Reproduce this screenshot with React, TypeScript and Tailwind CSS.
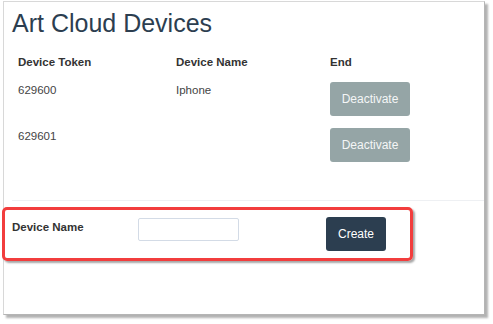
import React from "react";

export default function App() {
  const rows = [
    { token: "629600", name: "Iphone" },
    { token: "629601", name: "" },
  ];
  return (
    <div
      className="relative w-[493px] h-[324px] bg-white overflow-hidden"
      style={{ fontFamily: '"Liberation Sans", Arial, sans-serif' }}
    >
      <div className="ml-[3px] mt-[1px] w-[482px] h-[314px] border border-[#d8d8d8] border-r-[#b5b5b5] border-b-[#b5b5b5] shadow-[3px_3px_2px_rgba(0,0,0,0.3)] bg-white flex flex-col">
        <h1 className="ml-[8px] mt-[7px] text-[25px] leading-[28px] text-[#2c3e50] font-normal">
          Art Cloud Devices
        </h1>

        <div className="ml-[14px] mt-[17px] flex flex-col">
          <div className="flex h-[16px] items-center text-[11.5px] leading-[16px] font-bold text-[#333]">
            <div className="w-[158px]">Device Token</div>
            <div className="w-[154px]">Device Name</div>
            <div>End</div>
          </div>
          <div className="mt-[12px] flex flex-col gap-[12px]">
            {rows.map((r) => (
              <div key={r.token} className="flex items-start text-[11.5px] leading-[16px] text-[#444]">
                <div className="w-[158px]">{r.token}</div>
                <div className="w-[154px]">{r.name}</div>
                <button className="w-[80px] h-[34px] rounded-[3px] bg-[#95a5a6] text-[#f4f6f6] text-[12px]">
                  Deactivate
                </button>
              </div>
            ))}
          </div>
        </div>

        <div className="ml-[8px] mt-[38px] h-px bg-[#eef0f3]" />

        <div className="ml-[8px] mt-[17px] flex items-start">
          <div className="w-[126px] mt-[1px] text-[11.5px] leading-[16px] font-bold text-[#333]">
            Device Name
          </div>
          <input
            className="w-[101px] h-[23px] border border-[#d3dbe6] rounded-[2px] outline-none"
            type="text"
          />
          <button className="ml-[87px] -mt-[1px] w-[60px] h-[34px] rounded-[3px] bg-[#2c3e50] text-white text-[12px]">
            Create
          </button>
        </div>
      </div>

      <div className="absolute left-[2px] top-[207px] w-[411px] h-[54px] border-[3px] border-[#f23d3d] rounded-[5px] shadow-[2px_2px_2px_rgba(0,0,0,0.35)] pointer-events-none" />
    </div>
  );
}
